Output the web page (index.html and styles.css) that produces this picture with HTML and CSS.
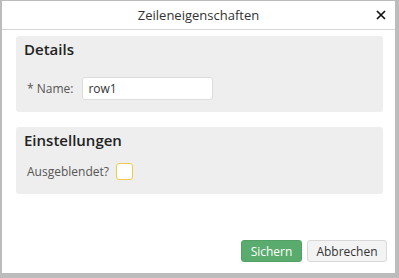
FILE: index.html
```html
<!DOCTYPE html>
<html>
<head>
  <title>Zeileneigenschaften</title>
  <link rel="stylesheet" href="styles.css">
</head>
<body>
  <div class="dialog">
    <div class="dialog-title">
      <span>Zeileneigenschaften</span>
      <button class="close-btn">
        <svg width="10" height="10" viewBox="0 0 10 10"><path d="M1 1L9 9M9 1L1 9" stroke="#111" stroke-width="1.7"/></svg>
      </button>
    </div>
    <div class="dialog-body">
      <div class="panel">
        <h2>Details</h2>
        <div class="field">
          <label for="nameInput">* Name:</label>
          <input type="text" id="nameInput" value="row1">
        </div>
      </div>
      <div class="panel panel-small">
        <h2>Einstellungen</h2>
        <div class="field">
          <label for="hiddenCheck">Ausgeblendet?</label>
          <span class="checkbox" id="hiddenCheck"></span>
        </div>
      </div>
    </div>
    <div class="dialog-buttons">
      <button class="btn btn-save">Sichern</button>
      <button class="btn btn-cancel">Abbrechen</button>
    </div>
  </div>
</body>
</html>
```

FILE: styles.css
```css
body {
  margin: 0;
  height: 278px;
  background-color: #bcbcbc;
  font-family: "Open Sans", "Liberation Sans", sans-serif;
  color: #333;
  overflow: hidden;
}

.dialog {
  margin: 1px 4px 0 2px;
  height: 272px;
  background-color: #fff;
  display: flex;
  flex-direction: column;
}

.dialog-title {
  height: 28px;
  border-bottom: 1px solid #d6d6d6;
  display: flex;
  align-items: center;
  justify-content: center;
  position: relative;
  font-size: 13px;
}

.close-btn {
  position: absolute;
  right: 9px;
  top: 9px;
  border: none;
  background: none;
  padding: 0;
  line-height: 0;
  cursor: pointer;
}

.dialog-body {
  padding: 6px 12px 0 14px;
  flex: 1;
}

.panel {
  background-color: #eeeeee;
  border-radius: 3px;
  padding: 3px 8px 0 8px;
  height: 73px;
  margin-bottom: 15px;
}

.panel-small {
  height: 64px;
}

h2 {
  margin: 0;
  font-size: 15px;
  font-weight: 600;
  color: #222;
  line-height: 20px;
}

.field {
  display: flex;
  align-items: center;
  margin-top: 18px;
  padding-left: 3px;
  font-size: 12px;
}

.field label {
  color: #555;
  margin-right: 9px;
}

.field input {
  width: 119px;
  height: 21px;
  border: 1px solid #ddd;
  border-radius: 3px;
  padding: 0 5px;
  font-family: inherit;
  font-size: 12px;
  color: #333;
}

.panel-small .field {
  margin-top: 13px;
}

.checkbox {
  width: 15px;
  height: 15px;
  border: 1px solid #f2c94c;
  border-radius: 3px;
  background-color: #fff;
  margin-left: -2px;
}

.dialog-buttons {
  display: flex;
  justify-content: flex-end;
  gap: 5px;
  padding: 0 8px 11px 0;
}

.btn {
  height: 22px;
  border-radius: 3px;
  font-family: inherit;
  font-size: 12px;
  padding: 0 8px;
  cursor: pointer;
}

.btn-save {
  width: 61px;
  background-color: #5aab6e;
  border: 1px solid #52a065;
  color: #fff;
}

.btn-cancel {
  width: 80px;
  background-color: #f3f3f3;
  border: 1px solid #d9d9d9;
  color: #333;
}
```
